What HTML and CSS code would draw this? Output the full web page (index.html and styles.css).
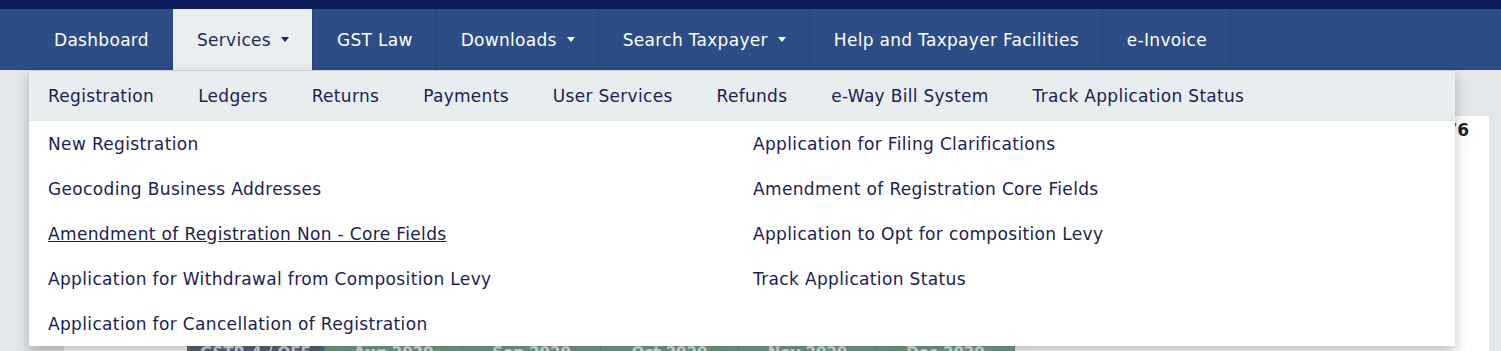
FILE: index.html
```html
<!DOCTYPE html>
<html lang="en">
<head>
  <meta charset="UTF-8">
  <meta name="viewport" content="width=device-width, initial-scale=1.0">
  <title>GST Services</title>
  <link rel="stylesheet" href="styles.css">
</head>
<body>
  <div class="top-strip"></div>

  <nav class="main-nav">
    <ul class="nav-list">
      <li class="nav-item">Dashboard</li>
      <li class="nav-item active">Services <span class="caret"></span></li>
      <li class="nav-item">GST Law</li>
      <li class="nav-item">Downloads <span class="caret"></span></li>
      <li class="nav-item">Search Taxpayer <span class="caret"></span></li>
      <li class="nav-item">Help and Taxpayer Facilities</li>
      <li class="nav-item">e-Invoice</li>
    </ul>

    <!-- Services dropdown (open) -->
    <div class="dropdown">
      <ul class="sub-tabs">
        <li>Registration</li>
        <li>Ledgers</li>
        <li>Returns</li>
        <li>Payments</li>
        <li>User Services</li>
        <li>Refunds</li>
        <li>e-Way Bill System</li>
        <li>Track Application Status</li>
      </ul>
      <ul class="sub-links">
        <li><a href="#">New Registration</a></li>
        <li><a href="#">Application for Filing Clarifications</a></li>
        <li><a href="#">Geocoding Business Addresses</a></li>
        <li><a href="#">Amendment of Registration Core Fields</a></li>
        <li><a href="#" class="hover">Amendment of Registration Non - Core Fields</a></li>
        <li><a href="#">Application to Opt for composition Levy</a></li>
        <li><a href="#">Application for Withdrawal from Composition Levy</a></li>
        <li><a href="#">Track Application Status</a></li>
        <li><a href="#">Application for Cancellation of Registration</a></li>
      </ul>
    </div>
  </nav>

  <div class="content">
    <div class="panel">
      <div class="panel-head">76</div>
      <table class="return-table">
        <tr>
          <th class="label-cell">GSTR-4 / OFF</th>
          <th>Aug 2020</th>
          <th>Sep 2020</th>
          <th>Oct 2020</th>
          <th>Nov 2020</th>
          <th>Dec 2020</th>
        </tr>
      </table>
    </div>
  </div>
</body>
</html>
```

FILE: styles.css
```css
body {
  margin: 0;
  background-color: #e3e7ea;
  font-family: "DejaVu Sans", Verdana, sans-serif;
  color: #1b2152;
  height: 351px;
  overflow: hidden;
}
ul {
  list-style: none;
  margin: 0;
  padding: 0;
}
.top-strip {
  height: 9px;
  background-color: #0e1d5a;
}
.main-nav {
  position: relative;
  background-color: #2c4d85;
  height: 61px;
}
.nav-list {
  display: flex;
  height: 100%;
  padding-left: 30px;
}
.nav-item {
  display: flex;
  align-items: center;
  padding: 0 23px 0 24px;
  color: #fff;
  font-size: 17px;
  letter-spacing: 0.3px;
  border-right: 1px solid #284676;
}
.nav-item.active {
  background-color: #e9eef1;
  color: #1f2a5c;
}
.caret {
  display: inline-block;
  width: 0;
  height: 0;
  margin-left: 10px;
  border-top: 5px solid currentColor;
  border-left: 4px solid transparent;
  border-right: 4px solid transparent;
}
.dropdown {
  position: absolute;
  top: 61px;
  left: 29px;
  width: 1426px;
  background-color: #fff;
  border-top: 1px solid #c9ced2;
  box-shadow: 0 6px 12px rgba(0, 0, 0, 0.25);
  z-index: 10;
}
.sub-tabs {
  display: flex;
  height: 49px;
  align-items: center;
  padding-left: 19px;
  background-color: #e8edf0;
  border-bottom: 1px solid #e1e6e9;
  font-size: 17px;
  letter-spacing: 0.3px;
}
.sub-tabs li {
  margin-right: 44px;
}
.sub-links {
  display: grid;
  grid-template-columns: 705px 1fr;
  grid-auto-rows: 45px;
  padding-left: 19px;
  font-size: 17px;
  letter-spacing: 0.35px;
}
.sub-links li {
  display: flex;
  align-items: center;
}
.sub-links a {
  color: #1b2152;
  text-decoration: none;
}
.sub-links a.hover {
  text-decoration: underline;
}
.content {
  padding-top: 46px;
}
.panel {
  margin-left: 64px;
  width: 1425px;
  height: 300px;
  background-color: #fff;
}
.panel-head {
  text-align: right;
  padding: 4px 20px 0 0;
  font-size: 17px;
  font-weight: bold;
  color: #1d1f33;
}
.return-table {
  margin: 204px 0 0 123px;
  border-collapse: collapse;
  font-size: 15px;
}
.return-table th {
  width: 137px;
  height: 30px;
  padding: 0;
  vertical-align: top;
  background-color: #7ba58f;
  color: #e9f1ec;
  border-right: 1px solid #6a9480;
  font-weight: bold;
}
.return-table th.label-cell {
  background-color: #5e687c;
  color: #dfe3ea;
}
```
